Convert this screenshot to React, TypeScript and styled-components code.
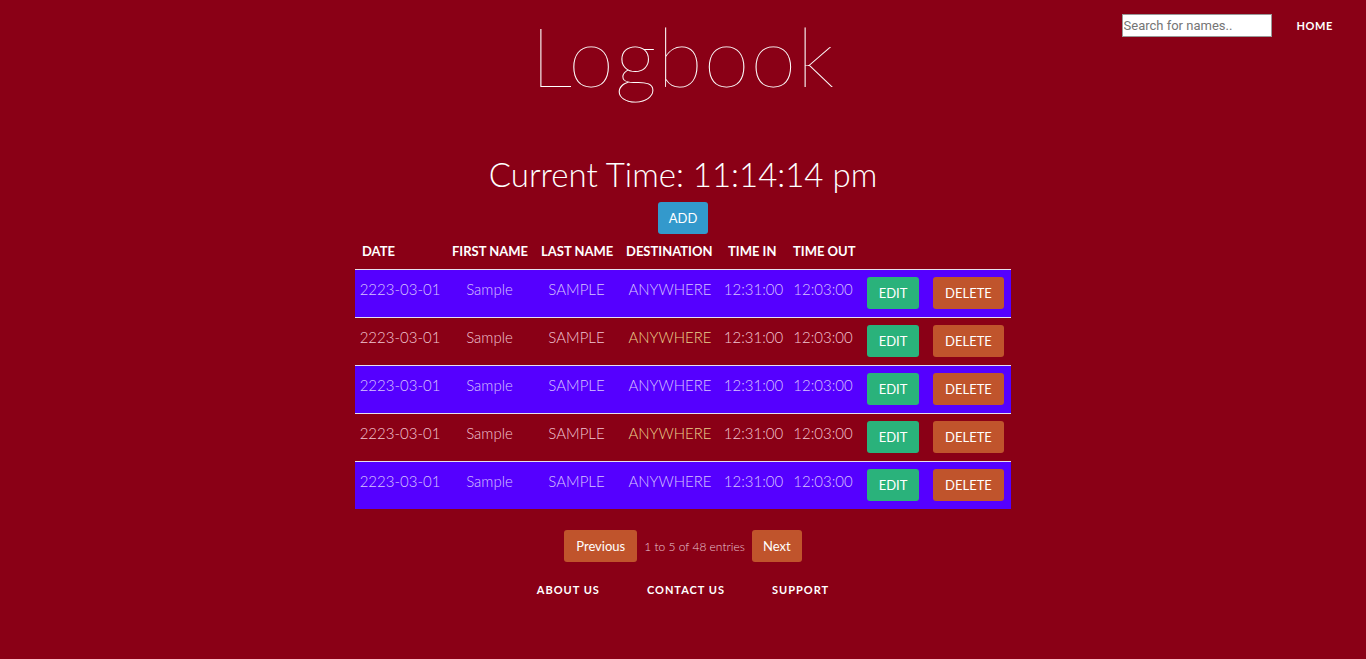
import React from "react";
import styled, { createGlobalStyle } from "styled-components";

const Global = createGlobalStyle`
  html, body { margin: 0; padding: 0; }
  body {
    background: #8a0016;
    font-family: Lato, "Open Sans", sans-serif;
    color: #fff;
    min-height: 659px;
  }
`;

const Page = styled.div`
  display: flex;
  flex-direction: column;
  align-items: center;
`;

const Header = styled.header`
  width: 100%;
  display: grid;
  grid-template-columns: 1fr auto 1fr;
  align-items: start;
`;

const Title = styled.h1`
  grid-column: 2;
  margin: 0;
  padding-top: 14px;
  font-family: Lato, sans-serif;
  font-weight: 200;
  font-size: 83px;
  line-height: 1;
  letter-spacing: 1px;
  color: #fff;
`;

const Nav = styled.nav`
  grid-column: 3;
  justify-self: end;
  display: flex;
  align-items: center;
  gap: 25px;
  padding: 14px 33px 0 0;
`;

const Search = styled.input`
  width: 150px;
  height: 23px;
  box-sizing: border-box;
  border: 1px solid #999;
  padding: 1px 1px;
  font-family: Roboto, "Liberation Sans", sans-serif;
  font-size: 13px;
  color: #333;
  background: #fff;
  &::placeholder { color: #757575; }
`;

const NavLink = styled.a<{ $ls?: number }>`
  font-family: Lato, sans-serif;
  font-weight: 700;
  font-size: 11px;
  letter-spacing: ${(p) => (p.$ls ?? 1)}px;
  color: #fff;
  text-decoration: none;
`;

const Clock = styled.h2`
  margin: 56px 0 0;
  font-family: Lato, sans-serif;
  font-weight: 300;
  font-size: 33px;
  line-height: 42px;
  color: #fff;
`;

const Button = styled.button<{ $bg: string; $w: number }>`
  width: ${(p) => p.$w}px;
  height: 32px;
  border: none;
  border-radius: 3px;
  background: ${(p) => p.$bg};
  color: #fff;
  font-family: Lato, sans-serif;
  font-size: 13px;
  font-weight: 400;
  padding: 0;
  cursor: pointer;
`;

const AddWrap = styled.div`
  margin-top: 7px;
`;

const Table = styled.table`
  margin-top: 1px;
  width: 656px;
  border-collapse: collapse;
  table-layout: fixed;
`;

const Th = styled.th<{ $w: number }>`
  box-sizing: border-box;
  width: ${(p) => p.$w}px;
  text-align: left;
  padding: 4px 0 6px 7px;
  font-family: Lato, sans-serif;
  font-weight: 700;
  font-size: 13px;
  line-height: 24px;
  text-transform: uppercase;
  color: #fff;
  white-space: nowrap;
`;

const Row = styled.tr<{ $alt: boolean }>`
  background: ${(p) => (p.$alt ? "#5500ff" : "transparent")};
  border-top: 1px solid #e6e0ee;
`;

const Td = styled.td<{ $color: string }>`
  padding: 7px 0 8px;
  vertical-align: top;
  text-align: center;
  font-family: Lato, sans-serif;
  font-weight: 300;
  font-size: 15px;
  line-height: 24px;
  color: ${(p) => p.$color};
  white-space: nowrap;
`;

const Pager = styled.div`
  margin-top: 21px;
  display: flex;
  align-items: center;
  gap: 7px;
`;

const PagerInfo = styled.span`
  font-family: Lato, sans-serif;
  font-weight: 300;
  font-size: 12px;
  color: #e9c7d2;
`;

const Footer = styled.footer`
  margin-top: 21px;
  display: flex;
  gap: 47px;
`;

const cols = [
  { label: "Date", w: 90 },
  { label: "First Name", w: 89 },
  { label: "Last Name", w: 85 },
  { label: "Destination", w: 102 },
  { label: "Time In", w: 65 },
  { label: "Time Out", w: 74 },
  { label: "", w: 66 },
  { label: "", w: 85 },
];

const rows = [0, 1, 2, 3, 4];

export default function App() {
  return (
    <>
      <Global />
      <Page>
        <Header>
          <Title>Logbook</Title>
          <Nav>
            <Search placeholder="Search for names.." />
            <NavLink href="#" $ls={0.6}>HOME</NavLink>
          </Nav>
        </Header>
        <Clock>Current Time: 11:14:14 pm</Clock>
        <AddWrap>
          <Button $bg="#3399cc" $w={50}>ADD</Button>
        </AddWrap>
        <Table>
          <thead>
            <tr>
              {cols.map((c, i) => (
                <Th key={i} $w={c.w}>{c.label}</Th>
              ))}
            </tr>
          </thead>
          <tbody>
            {rows.map((r) => {
              const alt = r % 2 === 0;
              const color = alt ? "#d8c4ff" : "#f2c6d2";
              const dest = alt ? "#d8c4ff" : "#ecd08c";
              return (
                <Row key={r} $alt={alt}>
                  <Td $color={color}>2223-03-01</Td>
                  <Td $color={color}>Sample</Td>
                  <Td $color={color}>SAMPLE</Td>
                  <Td $color={dest}>ANYWHERE</Td>
                  <Td $color={color}>12:31:00</Td>
                  <Td $color={color}>12:03:00</Td>
                  <Td $color={color}>
                    <Button $bg="#2ab27b" $w={52}>EDIT</Button>
                  </Td>
                  <Td $color={color}>
                    <Button $bg="#c0542c" $w={71}>DELETE</Button>
                  </Td>
                </Row>
              );
            })}
          </tbody>
        </Table>
        <Pager>
          <Button $bg="#c0542c" $w={73}>Previous</Button>
          <PagerInfo>1 to 5 of 48 entries</PagerInfo>
          <Button $bg="#c0542c" $w={50}>Next</Button>
        </Pager>
        <Footer>
          <NavLink href="#">ABOUT US</NavLink>
          <NavLink href="#">CONTACT US</NavLink>
          <NavLink href="#">SUPPORT</NavLink>
        </Footer>
      </Page>
    </>
  );
}
